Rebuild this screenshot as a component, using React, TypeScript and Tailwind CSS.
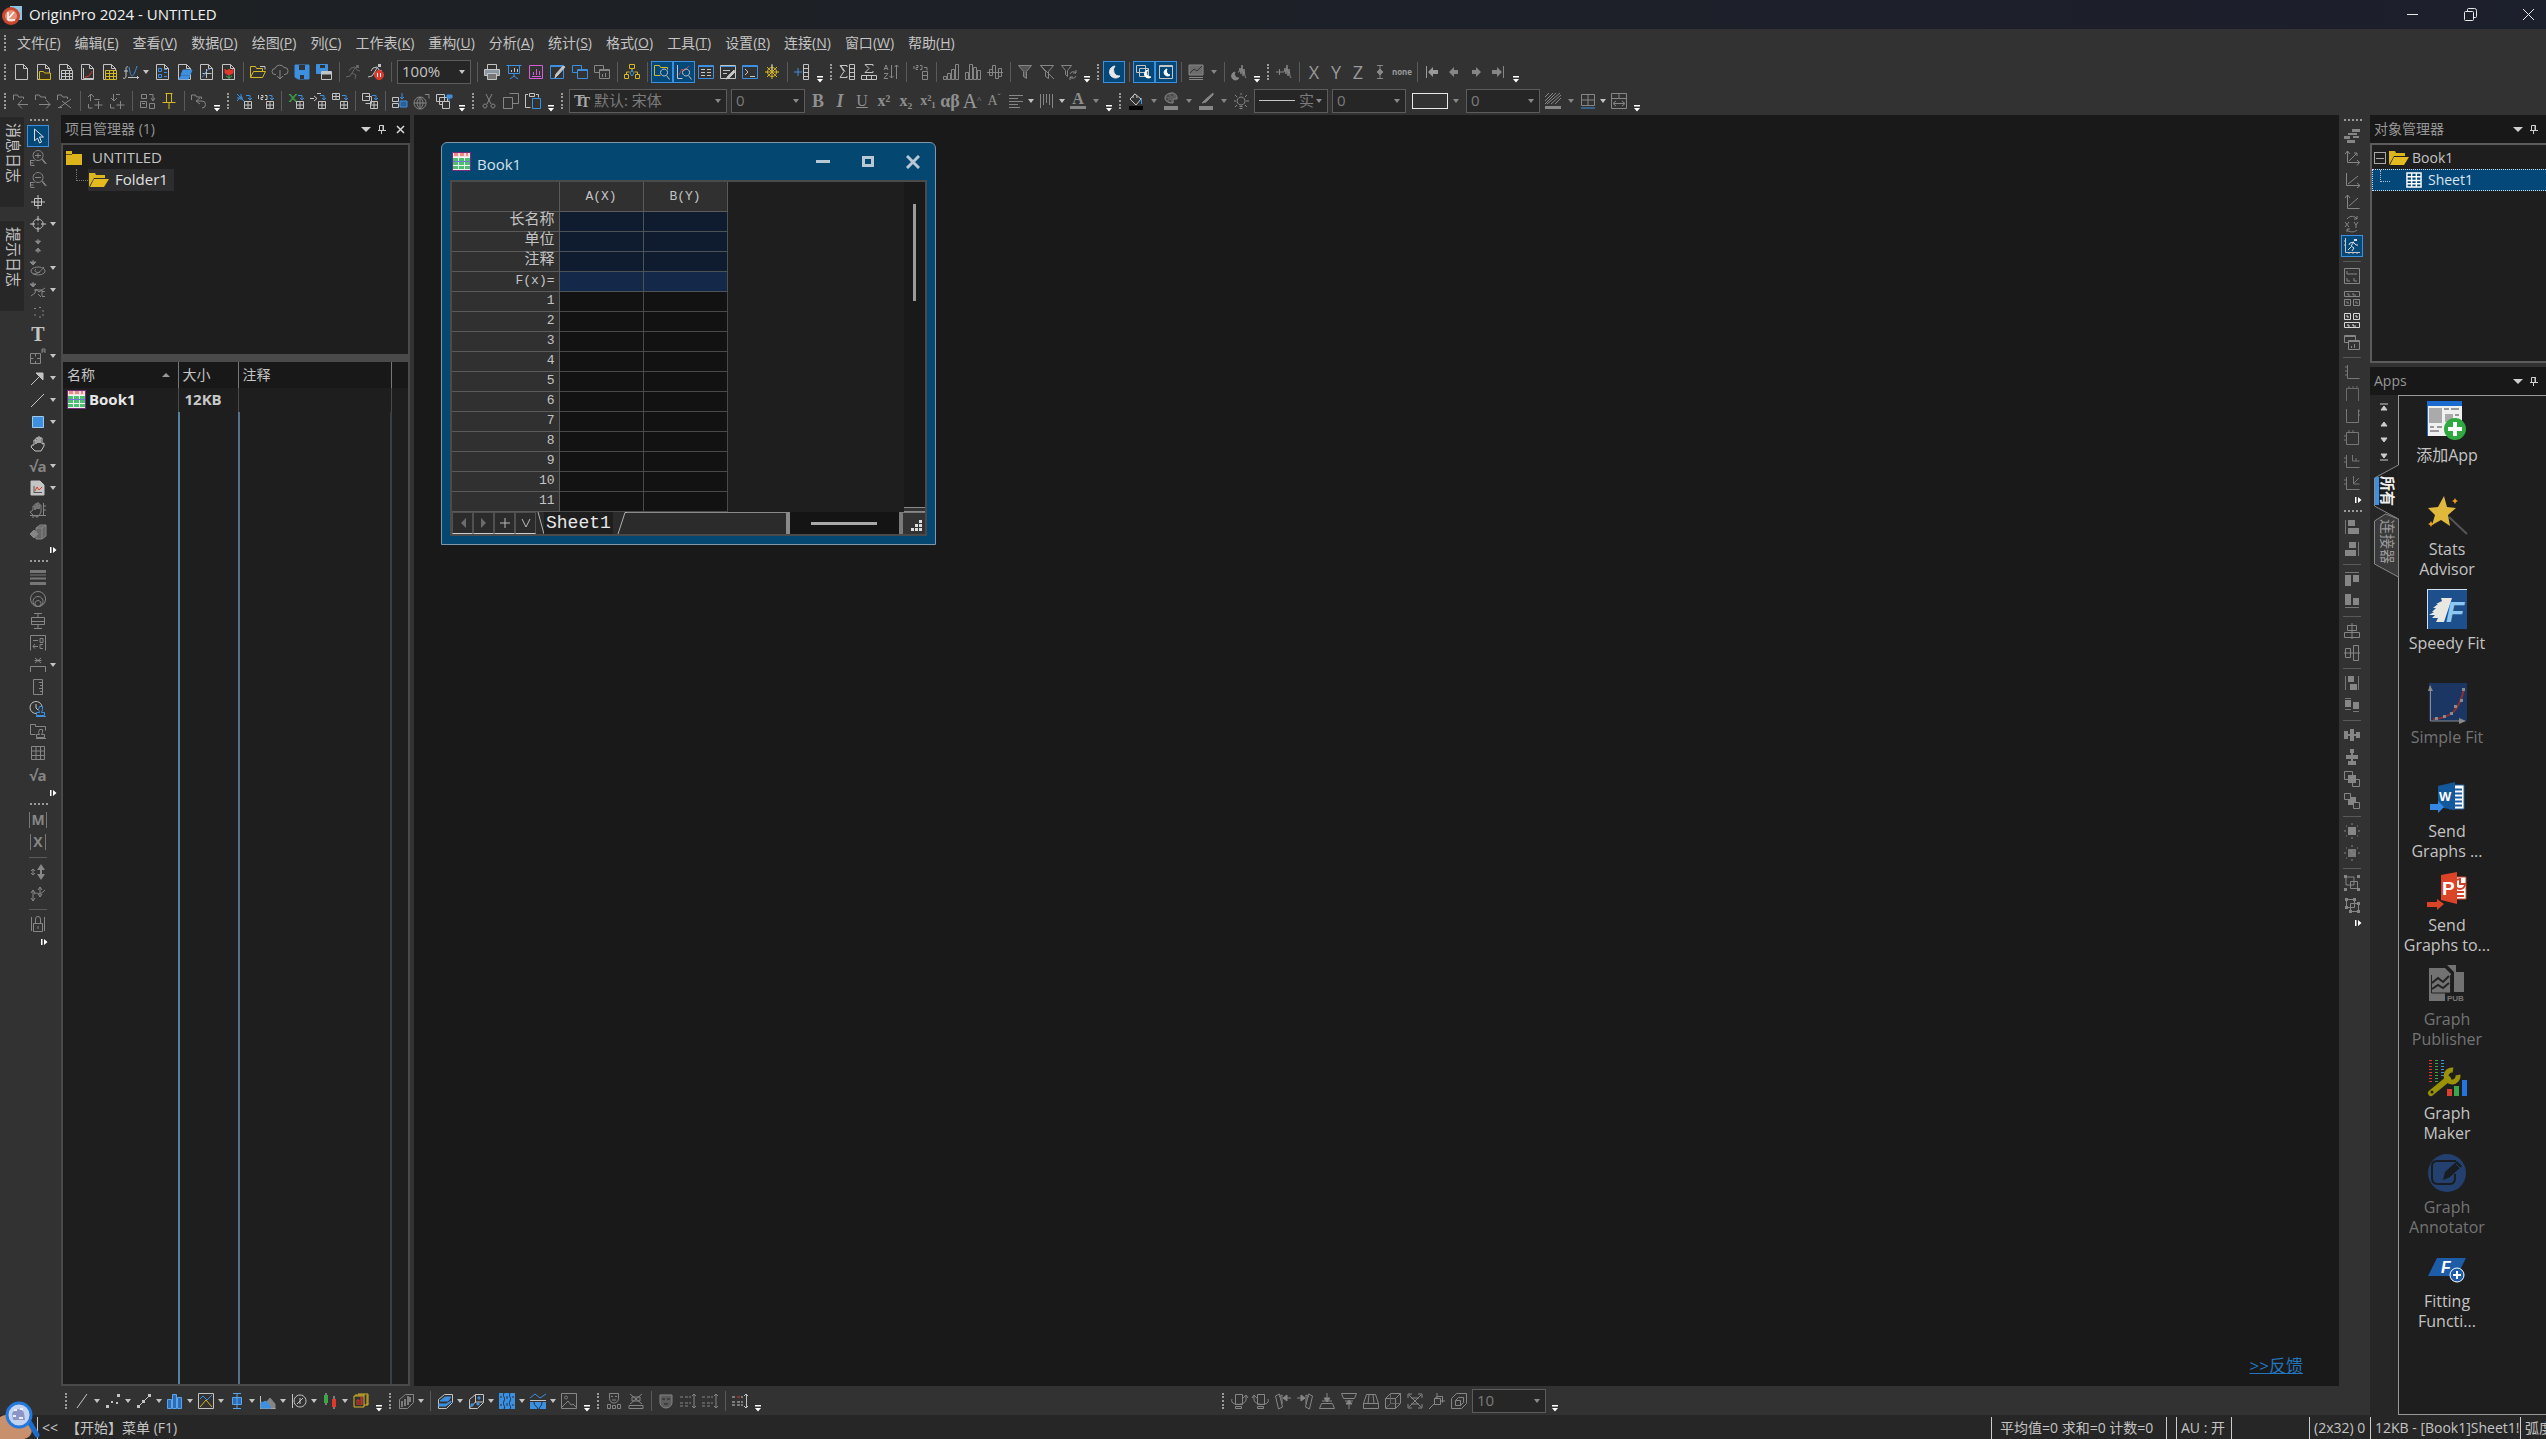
import type { ReactNode } from "react";
import clsx from "clsx";

const W = "#c4c4c4";
const G = "#868686";
const B = "#3d8fe0";
const Y = "#d6b824";
const R = "#e0392b";
const M = "#d45cd4";
const N = "#3aa648";

const DOC = "M2.5 .5h8l4 4v11h-12zM10.5 .5v4h4";
const GRID = "M4.5 6.5h11v9h-11zM8.5 6.5v9M12.5 6.5v9M4.5 9.5h11M4.5 12.5h11";
const RUN = "M9 3l-4 1-2 3M9 3l2 3 3 1M9 4l-3 5 4 2-1 4M6 9l-2 3-4 1";
const BLOCK = "M8.5 8.5h7v7h-7zM12 8.5v7M8.5 12h7";
const TURN = "M10 2.5h4v4M12 5l2 2 2-2";
const FUNNEL = "M1.5 1.5h13l-5 6v7l-3-2v-5z";
const MOON = "M9 2a6 6 0 1 0 5 10a6 6 0 0 1-5-10z";
const WAVE = "M7 8h1l1-4 1 6 1-9 1 11 1-7 1 7 1 2";
const TAB = "M.5 7v-5h4l1 2h5v2";
const HEX = "M1.5 6.5l6-5h8v8l-6 6h-8z";
const DROP = "M3 0v4M0 2l3 3 3-3z";

// each shape: path, stroke, fill
type Shape = [string, string?, string?];

const icons: Record<string, Shape[]> = {
  "New Project": [[DOC, W]],
  "New Folder": [[DOC, W], ["M4.5 7.5h4l1 1.5h6v6.5h-11z", Y, "#3a3520"]],
  "New Workbook": [[DOC, W], [GRID, W, "#333"]],
  "New Graph": [[DOC, W], ["M4.5 4v10.5h10", W], ["M6 13c3 0 5-1 7-6", R]],
  "New Matrix": [[DOC, W], [GRID, Y, "#333"]],
  "New Function Plot": [["M5 3c-2-1-2 1-2 3v6c0 2-1 3-3 2M1 7h4", W], ["M6 3c2 12 4 12 8-1", B], ["M5 13.5h11M14.5 12v3", W]],
  "New Layout": [[DOC, W], ["M4.5 4.5h3v3h-3zM4.5 10.5h3v3h-3zM10 5.5h3M10 8.5h3M10 12.5h3", B]],
  "New Notes": [[DOC, W], ["M7 6h9l-2 5h-9zM5 12h9l-2 3h-9z", B, B]],
  "New Plot": [[DOC, W], ["M4.5 9.5h9M8.5 5v9", W], ["M4 13c3-1 3-7 8-8", B]],
  "New Image": [[DOC, W], ["M5 5v4l4 2 4-2v-4l-2 2-2-2-2 2z", R, R], ["M9 11v4M6 12l3 2 3-2", N]],
  Open: [["M.5 13.5v-11h5l1 2h6v3M.5 13.5l3-6h12l-3 6z", Y], ["M10 2.5h5v3", W]],
  "Open Cloud": [["M4 10.5h-1a3 3 0 0 1 0-6a5 5 0 0 1 9-1a3.5 3.5 0 0 1 1 7h-1M8 6v9M5 12l3 3 3-3", G]],
  Save: [["M1 1h14v14h-11l-3-2z", B, B], ["M5 1h6v5h-6zM6 11h4v4h-4z", "none", "#333"]],
  "Save As": [["M.5 .5h11v9h-11z", B, B], ["M4 1h5v3h-5z", "none", "#333"], ["M5.5 7.5h10v8h-10z", W, "#333"], ["M6 8h9v2h-9z", W, W]],
  Recalculate: [[RUN, "#666"], ["M10 1h3v3h-3z", "none", "#666"]],
  "Stop Recalculate": [[RUN, W], ["M10 0h3v3h-3z", "none", W], ["M11 6.5a4.5 4.5 0 1 0 .1 0z", R, R], ["M9.5 9v4M12.5 9v4", "#fff"]],
  Print: [["M3.5 5.5v-5h9v5", W], ["M.5 5.5h15v6h-15z", W, "#8a98a4"], ["M3.5 9.5h9v6h-9z", W, "#777"]],
  "Slide Show": [["M.5 1.5h15M2.5 1.5v8h11v-8M8 10v3M4 15l4-3 4 3", B], ["M5.5 8v-2M8.5 8v-4M11.5 8v-3", W]],
  "Open Graph": [["M1.5 1.5h13v13h-13z", M], ["M4 12.5h9M5.5 11v-3M8.5 11v-6M11.5 11v-4", M]],
  "Edit Window": [["M.5 1.5h13v13h-13z", B], ["M.5 2.5h13", B], ["M15 3l-7 8-3 3 1-4 7-8z", W, W]],
  Duplicate: [["M.5 1.5h9v7h-9z", B, "#333"], ["M5.5 5.5h10v9h-10zM5.5 6.5h10", B, "#333"]],
  "Duplicate Graph": [["M.5 1.5h9v7h-9z", G, "#333"], ["M5.5 5.5h10v9h-10zM5.5 6.5h10M8.5 13v-3M11.5 13v-4", G, "#333"]],
  "Code Builder": [["M5.5 .5h5v4h-5zM.5 10.5h4v4h-4zM11.5 10.5h4v4h-4z", Y], ["M8 5v3M2.5 10v-2h3M13.5 10v-2h-3", Y], ["M8 6l2 3-2 3-2-3z", B]],
  "Project Explorer": [["M.5 1.5h5l1 2h7v2M.5 1.5v10h6", Y], ["M10 5a3.5 3.5 0 1 0 .1 0zM12.5 11.5l3 4", W]],
  "Object Manager": [["M1.5 1v13.5h5", W], ["M3 11l3-6 2 2 5-5", R], ["M10 5a3.5 3.5 0 1 0 .1 0zM12.5 11.5l3 4", W]],
  "Result Window": [["M.5 1.5h15v13h-15z", B], ["M.5 2.5h15", B], ["M3 5.5h4M3 8.5h4M3 11.5h4M9 5.5h4M9 8.5h4M9 11.5h4", W]],
  "Notes Window": [["M.5 1.5h15v13h-15z", W], ["M.5 2.5h15", B], ["M3 6.5h7M3 9.5h4", W], ["M14 6l-6 6-2 3 3-1 6-6z", W, W]],
  "Command Window": [["M.5 1.5h15v13h-15z", B], ["M.5 2.5h15", B], ["M3 5l3 3-3 3M8 12.5h5", W]],
  Settings: [["M8 1v14M1 8h14M3 3l10 10M13 3l-10 10", Y], ["M8 3.5a4.5 4.5 0 1 0 .1 0z", Y], ["M8 0v7", W]],
  "Add Column": [["M0 8h8M4 4v8", B], ["M9.5 .5h5v15h-5zM9.5 4.5h5M9.5 8.5h5M9.5 12.5h5", W]],
  "Column Statistics": [["M8 3v-1.5h-7l4 6-4 6h7v-1.5M2 2l4 5.5", W], ["M10.5 .5h5v15h-5zM10.5 4.5h5M10.5 8.5h5M10.5 12.5h5", W]],
  "Row Statistics": [["M12 2v-1.5h-8l4 4-4 4h8v-1.5", W], ["M.5 11.5h15v4h-15zM5.5 11.5v4M10.5 11.5v4", W]],
  Sort: [["M1 6l2-5 2 5M1.5 4.5h3M1 9.5h4l-4 5h4", G], ["M8.5 1v13M6.5 12l2 2 2-2M13.5 15v-14M11.5 3l2-2 2 2", G]],
  "Set Values": [["M1 2v3M3 1.5h2v2h-2v2h2M7 1.5h2v4h-2M11 3.5h3v3", G], ["M9.5 7.5h5v8h-5zM9.5 11.5h5", G]],
  "Bars Up": [["M.5 12.5h3v3h-3zM4.5 9.5h3v6h-3zM8.5 5.5h3v10h-3zM12.5 .5h3v15h-3z", G]],
  Histogram: [["M.5 8.5h3v7h-3zM4.5 .5h3v15h-3zM8.5 3.5h3v12h-3zM12.5 6.5h3v9h-3z", G]],
  "Signed Bars": [["M0 8.5h16M2.5 5.5h3v6h-3zM5.5 1.5h3v7h-3zM8.5 8.5h3v6h-3zM11.5 4.5h3v8h-3z", G]],
  Filter: [[FUNNEL, G, "#555"]],
  "Filter Off": [[FUNNEL, G], ["M1 1l14 14", G]],
  "Filter Refresh": [["M.5 1.5h10l-4 5v6l-2-2v-4z", G], ["M9 10a3.5 3.5 0 0 1 6-1M15 6v3h-3M15 12a3.5 3.5 0 0 1-6 1M9 16v-3h3", G]],
  "Dark Mode": [[MOON, "#e8e8e8", "#e8e8e8"]],
  "Dark Graphs": [["M.5 1.5h9v7h-9zM3.5 4.5h9v8h-9z", W], ["M12 6a4 4 0 1 0 3 7a4 4 0 0 1-3-7z", "#fff", "#fff"]],
  "Dark Window": [["M1.5 1.5h13v13h-13zM1.5 2.5h13", W], ["M9 5a3.5 3.5 0 1 0 3 6a4 4 0 0 1-3-6z", "#fff", "#fff"]],
  "Theme Graph": [["M1 1h14v10h-14z", G, "#6c6c6c"], ["M2 9l4-4 3 2 5-5", "#333"], ["M1 13.5h14M1 15.5h14", G]],
  "Dark Wave": [["M4 8a4 4 0 1 0 4 6a4 4 0 0 1-4-6z", G, G], [WAVE, G]],
  "Add Wave": [["M0 8h7M3.5 5v6", G], [WAVE, G]],
  "Y Error": [["M5 1.5h6M5 14.5h6M8 2v12", G], ["M8 5l3 3-3 3-3-3z", G, G]],
  First: [["M2.5 2v12", "#999"], ["M4 8l5-5v3h5v4h-5v3z", "none", "#999"]],
  Previous: [["M3 8l5-5v3h4v4h-4v3z", "none", G]],
  Next: [["M13 8l-5-5v3h-4v4h4v3z", "none", G]],
  Last: [["M13.5 2v12", G], ["M12 8l-5-5v3h-5v4h5v3z", "none", G]],

  "Move Back": [[TAB, G], ["M15 11.5h-10M9 7l-4 4.5 4 4", G]],
  "Move Forward": [[TAB, G], ["M4 11.5h11M11 7l4 4.5-4 4", G]],
  "Move Off": [[TAB, G], ["M3 14l11-8M5 8l9 7M1 14.5h4", G]],
  "Upload Add": [["M1.5 11v4h4M3.5 8v-7M1 4l3-3 3 3", G], ["M7.5 6.5h5M11.5 8v8M7.5 12h8", G]],
  "Download Add": [["M1.5 11v4h4M4.5 1v6M2 5l3 3 3-3M7 1.5h4", G], ["M11.5 8v8M7.5 12h8", G]],
  "Sync Tree": [["M2.5 1.5h5v4h-5zM1.5 8.5h6v6h-6zM10.5 10.5h5v5h-5zM10 1.5h4v6M12 5l2 3 2-3M3 10.5h3", G]],
  Pin: [["M4.5 .5h7M5.5 1v8M10.5 1v8M1.5 9.5h13M8 10v6", Y, "#6b5e18"]],
  Undo: [[TAB, G], ["M9 5l-4 3 4 3M5 8h6a3 3 0 0 1 0 7", G]],
  "Import Wizard": [["M1 1l8 8M1 5h6M5 1v6M1 8l5-5", B], [TURN, B], [BLOCK, W]],
  "Import ASCII": [["M.5 2v4M3 2.5h2v2h-2v2h2M7 2.5h2v4h-2", W], ["M11 2.5h3v4M12 5l2 2 2-2", B], [BLOCK, W]],
  "Import Excel": [["M1 1l7 8M8 1l-7 8", N], ["M2 1l7 8M9 1l-7 8", N], [TURN, B], [BLOCK, W]],
  "Import Multiple": [["M0 5.5h4M4 3l3 2.5-3 2.5M7 .5h4", W], [TURN, B], [BLOCK, W]],
  "Import Table": [["M.5 .5h7v6h-7zM4 .5v6M.5 3.5h7", W], [TURN, B], [BLOCK, W]],
  "Import Copy": [["M.5 .5h7v7h-7zM3.5 3.5h6v7h-6", W], [TURN, B], [BLOCK, W]],
  "Data Connector": [["M.5 4.5h6v4h-6zM.5 10.5h6v4h-6z", W], ["M10 0v6M8 4l2 2 2-2", B], ["M8 8h7v6h-7z", B, "#2a5f98"]],
  "Web Data": [["M6 4a6 6 0 1 0 .1 0zM0 10h12M6 4v12M6 4c-4 4-4 8 0 12M6 4c4 4 4 8 0 12M11 1.5h4v4", G]],
  "Clone Data": [["M.5 1.5h8v7h-8zM3.5 4.5h8v7h-8z", W], ["M6.5 8.5h7v7h-7z", W, "#333"], ["M11 2h5v3h-5zM13 5v3", B, B]],
  Cut: [["M5 1l5 10M11 1l-5 10", G], ["M4 11a2 2 0 1 0 .1 0zM12 11a2 2 0 1 0 .1 0z", G]],
  Copy: [["M.5 4.5h9v11h-9z", G], ["M6.5 .5h9v10h-6", G]],
  Paste: [["M3 1.5h-2.5v13h5M11 1.5h2.5v3", W], ["M4.5 .5h5v3h-5z", W], ["M7.5 5.5h8v10h-8z", B]],
  Align: [["M1 2.5h14M1 5.5h9M1 8.5h14M1 11.5h9M1 14.5h11", G]],
  Merge: [["M1.5 1v14M4.5 1v11M7.5 1v9M10.5 1v11M13.5 1v14", G]],
  "Fill Color": [["M2 6l5-5 6 5-5 6z", W], ["M5 5c0-6 4-4 4 0", W], ["M13.5 5v6", B], ["M1 13h14v4h-14z", "none", "#050505"]],
  Palette: [["M8 0a7 5 0 1 0 2 10c1-2-1-3 1-4h3a5 5 0 0 0-6-6z", G, "#5c5c5c"], ["M4 3h2M8 2h2M3 6h2M6 8h2", "#333"], ["M1 13h14v4h-14z", "none", G]],
  "Line Color": [["M15 0l-7 6-4 4 4-1 7-7z", G, G], ["M1 13h14v4h-14z", "none", G]],
  Light: [["M8 4a4 4 0 1 0 .1 0zM6.5 13.5h3M6.5 15.5h3M8 0v2M1 8h2M13 8h3M2 2l2 2M14 2l-2 2M2 14l2-2M14 14l-2-2", G]],
  Pattern: [["M0 4l4-4M0 8l8-8M0 11l11-11M2 11l13-11M6 11l10-9M10 11l6-6", G], ["M0 13h16v3h-16z", "none", G]],
  Borders: [["M1.5 1.5h13v11h-13zM8 1.5v11M1.5 7h13", G], ["M1 15h14", B]],
  "Merge Cells": [["M.5 .5h15v15h-15zM.5 5.5h15M8 .5v5M3 10.5h10M5 8l-3 2.5 3 2.5M11 8l3 2.5-3 2.5", G]],

  Pointer: [["M4.5 1v12l3-3 2 5 2-1-2-5h4z", "#e0e0e0"]],
  "Zoom In": [["M8 .5a5 5 0 1 0 .1 0zM5 5.5h6M8 3v5M.5 10.5h4M.5 10v5M.5 13h3M.5 15.5h4", G], ["M11.5 9l4 5M12.5 9l4 5", G]],
  "Zoom Out": [["M8 .5a5 5 0 1 0 .1 0zM5 5.5h6M.5 10.5h4M.5 10v5M.5 13h3M.5 15.5h4", G], ["M11.5 9l4 5M12.5 9l4 5", G]],
  "Screen Reader": [["M8 1v14M1 8h14", W], ["M4.5 4.5h7v7h-7z", W]],
  "Data Reader": [["M8 3a5 5 0 1 0 .1 0zM8 0v5M8 11v5M0 8h5M11 8h5", W], ["M7.5 8h1", W]],
  "Data Selector": [["M8 1v4M5.5 3l2.5 3 2.5-3zM8 15v-4M5.5 13l2.5-3 2.5 3z", G, G]],
  "Region Select": [[DROP, G, G], ["M8 7a7 4 0 1 0 .1 0zM3 14c5 0 8-3 11-7M6 9a3 2 0 1 0 4 3", G]],
  "Mask Points": [[DROP, G, G], ["M1 14l4-3 1-4 3 3 6-4M4 8h8v6M12 9.5h3M12 14.5h3M8 12l3 3", G]],
  "Draw Data": [["M4 4.5h2M9 3.5h2M12 7h2M4 11h2M9 13h2M12 11h2", G]],
  "Insert Graph": [["M.5 5.5h10v10h-10zM.5 10.5h3M7 10.5h3.5M5.5 5.5v3M5.5 13v3M12 5v-4h3v4M12 3h3", G]],
  Arrow: [["M1 15l10-10", W], ["M6 3h7v7z", W, W]],
  Line: [["M1 15l13-13", W]],
  Rectangle: [["M2.5 2.5h11v11h-11z", "#9cc8f0", B]],
  Hand: [["M4 9v-5h2v4v-6h2v5v-6h2v6v-5h2v6l2-1v3l-3 5h-6l-4-4 1-2z", W]],
  "Pdf Graph": [["M1 1h9l4 4v10h-13z", W, W], ["M4 6v7M4 12.5h8", "#555"], ["M5 11l2-4 2 3 3-3", R]],
  "Hand Graph": [["M3 8v-4h2v4v-6h2v5v-6h2v6v-4h2v7l-2 4h-5l-4-4zM13.5 1v13M0 13.5h16M3 13v3M7 13v3M14 4h2M14 8h2", G]],
  Cube: [["M6 4l4-3h6v11l-4 3h-6zM12 4v11M12 4l4-3M6 4h6", G, "#666"], ["M4 6l4 4-4 4-4-4z", G, G]],
  Lines: [["M0 1h16v3h-16zM0 8.5h16v2h-16zM0 5.5h16v1h-16zM0 13h16v3h-16z", "none", "#777"]],
  Target: [["M8 .5a7.5 7.5 0 1 0 .1 0zM8 5.5a5 5 0 1 0 .1 0zM8 9.5a3 3 0 1 0 .1 0z", G]],
  "Box Scale": [["M4 .5h8M4 15.5h8M8 0v4M8 12v4M1.5 4.5h13v7h-13zM1.5 8.5h13", G]],
  Legend: [["M.5 15.5v-15h15v15M3 5.5h5M3 11.5h5M5 9l-2 2.5 2 2M10 3.5h3v4h-3zM13 9.5h-3v4h3", G]],
  Asterisk: [["M5 1l6 5M11 1l-6 5M4.5 3.5h7", G], ["M.5 15v-5.5h15v5.5", G]],
  Ruler: [["M3.5 .5h9v15h-9zM9 3.5h3M10 6.5h2M9 9.5h3M10 12.5h2", G]],
  "Time Stamp": [["M6 .5a6 6 0 1 0 .1 0zM6 3v4l2 2", W], ["M9.5 5.5h3v3l-1 3h3v3h-8v-3h3l-1-3zM6 15.5h10", B, "#323232"]],
  "Project Stamp": [["M.5 1.5h5v2h10v4M.5 1.5v10h5", G], ["M9.5 6.5h3v3l-1 2h3v3h-8v-3h3l-1-2zM6 15.5h10", G]],
  "Grid Lines": [["M1.5 1.5h13v13h-13zM6 1.5v13M10.5 1.5v13M1.5 6h13M1.5 10.5h13", G]],
  Shift: [["M3 5v6M1 7l2-2 2 2M1 9l2 2 2-2", G], ["M11 0l-4 6h3v4h-3l4 6 4-6h-3v-4h3z", "none", G]],
  Shifts: [["M3 4v11M1 7l2-3 2 3M1 12l2 3 2-3M10 1v10M8 4l2-3 2 3M8 8l2 3 2-3M4 8c3-3 5 3 11-4", G]],
  Lock: [["M1.5 1v14M14.5 1v14M3.5 7.5h9v8h-9zM5.5 7v-4a2.5 2.5 0 0 1 5 0v4M8 10v3", G]],

  "Line Plot": [["M3 15l10-14", W]],
  "Scatter Plot": [["M1 12h3v3h-3zM6 8h2v2h-2zM12 1h3v3h-3zM11 9h2v2h-2z", "none", W]],
  "Line Symbol": [["M2 14l11-11", W], ["M1 12h3v3h-3zM6 7h3v3h-3zM12 1h3v3h-3z", "none", W]],
  "Column Plot": [["M.5 6.5h4v9h-4zM5.5 1.5h4v14h-4zM10.5 4.5h4v11h-4z", "#5aa4ec", "#2c6cb4"]],
  "Multi Panel": [["M.5 .5h15v15h-15z", W], ["M2 6l3-3 4 4 5-5", B], ["M2 14l6-7 6 7", Y]],
  "Box Plot": [["M4 .5h8M4 15.5h8M8 0v16M3.5 4.5h9v7h-9z", "#5aa4ec", "#2c6cb4"]],
  "Area Plot": [["M.5 3v12.5h15", W], ["M1 9l4 2 5-6 5 6v4h-14z", G, G], ["M1 10l5-2 5 7h-10z", B, B]],
  "Polar Plot": [["M1.5 1v14M9 2a6 6 0 1 0 .1 0zM9 5v6M6 11l3-3 3-3", W]],
  Candlestick: [["M4 0v12M12 3v13", W], ["M2 2h4v8h-4z", "none", N], ["M10 6h4v8h-4z", "none", R]],
  Template: [["M1 3h10v11h-10z", Y], ["M5 1h10v11h-4", Y], ["M2 2h10M14 2v10", Y], ["M4 12v-5h2v5M8 12v-8h1v8", R]],
  "3D Bars": [[HEX, G], ["M4 14v-6M7 13v-7M10 12v-9M12 9v-5", W]],
  "3D Surface": [[HEX, W], ["M3 8l5-4h6l-3 4zM2 13h7l5-4v-1l-5 3h-7z", B, B]],
  "3D Scatter": [[HEX, W], ["M7.5 1.5v8M1.5 15l6-6h8", W], ["M3 11h2v2h-2zM10 4h2v2h-2zM9 10h2v2h-2z", B, B]],
  Contour: [["M0 0h16v16h-16z", "none", B], ["M5 0c-2 4 2 4 0 8s2 5 0 8M11 0c-2 4 2 4 0 8s2 5 0 8M1 4h2M13 4h2M1 12h2M13 12h2M8 3v3M8 10v3", "#15304e"]],
  "Contour Profile": [["M0 5l5-4 5 4 6-4", B], ["M0 7.5h16", W], ["M0 9h16v7h-16z", "none", B], ["M4 9c0 4 3 4 4 7M12 9c0 4-2 4-3 7", "#15304e"]],
  "Image Plot": [["M.5 .5h15v15h-15zM1 14l6-6 3 4 2-1 3 3M5 3a1.5 1.5 0 1 0 .1 0z", G]],
  "Mask A": [["M3.5 .5h9v5a4.5 4.5 0 0 1-9 0zM5 3.5h2M9 3.5h2M6 7h4M1.5 11.5h3v4h-3zM6.5 12.5h3v3h-3zM11.5 11.5h3v4h-3z", G]],
  "Mask B": [["M2 1l12 10M14 1l-12 10M4 4h8v4h-8zM1 12.5h14v3h-14z", G]],
  "Mask C": [["M2 2h12v6a6 6 0 0 1-6 7a6 6 0 0 1-6-7z", G, "#5c5c5c"], ["M4 6h3M9 6h3M6 11h4", "#222"]],
  "Mask D": [["M0 4h3M5 4h3M9 4h2M0 10h3M5 10h3M9 10h2M0 13h3M5 13h3M14 1v14M12 3l2-2 2 2M12 13l2 2 2-2", G]],
  Unmask: [["M0 4h3M9 4h2M0 9h3M5 9h3M9 9h2M0 12h3M5 12h3M9 12h2M14.5 1v14M12 3l2-2 2 2M12 13l2 2 2-2", W], ["M5 4h3", R]],

  "Rotate CCW": [["M4.5 1.5h7v10h-7z", G], ["M1 6c-3 7 13 7 14 1v-4M12 5l3-3 2 3", G], ["M4.5 13.5h6v2h-6z", G]],
  "Rotate CW": [["M4.5 1.5h7v10h-7z", G], ["M15 6c3 7-13 7-14 1v-4M4 5l-3-3-2 3", G], ["M4.5 13.5h6v2h-6z", G]],
  "Tilt Left": [["M.5 3l4-2 3 13-4 2zM4 4l3-2v9", G], ["M16 5h-6M12 2l-4 3 4 3z", G, G]],
  "Tilt Right": [["M15.5 3l-4-2-3 13 4 2zM12 4l-3-2v9", G], ["M0 5h6M4 2l4 3-4 3z", G, G]],
  "Tilt Down": [["M.5 15.5h15l-2-5h-11zM3 8h10", G], ["M8 0v6M5 5h6l-3 4z", G, G]],
  "Tilt Up": [["M.5 .5h15l-2 5h-11zM4 8h8", G], ["M8 16v-6M5 11h6l-3-4z", G, G]],
  Perspective: [["M.5 15.5v-5h15v5zM.5 10.5l3-9h9l3 9M6 2l-1 8M10 2l1 8", G]],
  "Cube View": [["M.5 5.5h10v10h-10zM.5 5.5l5-5h10v10l-5 5M10.5 5.5l5-5", G], ["M5.5 .5v10M.5 15.5l5-5h10", "#666"]],
  "Fit View": [["M1 5v-4h4M11 1h4v4M15 11v4h-4M5 15h-4v-4M2 2l12 12M14 2l-12 12M4 5h8M4 11h8", G]],
  "Frame View": [["M5.5 5.5h6v6h-6zM8 0v5M11 8h5M5 11l-5 5M5.5 5.5l3-2h5v6", G]],
  "Reset View": [["M.5 5.5l5-5h10v10l-5 5h-10zM4.5 7.5l3-3h5v5l-3 3h-5zM4.5 7.5h5v5", G]],

  Antialias: [["M8 1h8v3h-8zM4 5h9v2h-9zM0 8h6v3h-6zM9 8h6v2h-6zM3 12h8v3h-8z", "none", G]],
  "Axes XY": [["M3.5 1v11.5h12M1 4l2.5-3 2.5 3M13 10l2.5 2.5-2.5 3M5 11l8-8M10 3h3v3", G]],
  "Axes X": [["M2.5 1v12.5h13M13 11l3 2.5-3 2.5M4 12l10-8", G]],
  "Axes Y": [["M3.5 1v13.5h12M1 4l2.5-3 2.5 3M5 12l9-8", G]],
  "Exchange XY": [["M1 6l4 5M5 6l-4 5M10 6l2 3 2-3M12 9v3M3 3c3-4 8-3 10 0M10 3h3v-3M13 14c-3 3-8 2-10 0M6 13h-3v3", G]],
  "Speed Mode": [["M1.5 0v14.5h14.5M0 3h1M0 7h1M5 15v1M9 15v1M13 15v1", W], ["M10 4l-4 1-1 2M10 4l-3 4 3 2-2 3M7 9l-3 3M10 5l2 2h2", "#e0e0e0"], ["M10 1h3v2h-3z", "none", "#e0e0e0"]],
  "Layer One": [["M.5 .5h15v15h-15zM3 3v3h10M3 10v3h3M10 10v3h3", G]],
  "Layer Two": [["M.5 1.5h15v5h-15zM.5 9.5h6v6h-6zM9.5 9.5h6v6h-6zM4 3v2h2M9 3v2h3M3 11v2h2M12 11v2h2", G]],
  "Layer Three": [["M.5 1.5h6v6h-6zM9.5 1.5h6v6h-6zM.5 10.5h15v5h-15zM3 3v2h2M12 3v2h2M4 12v2h2M9 12v2h3", "#d8d8d8"]],
  "Layer Four": [["M.5 1.5h11v7h-11zM.5 2.5h11", G], ["M4.5 6.5h11v9h-11zM4.5 7.5h11M7.5 14v-2M10.5 14v-4", G, "#333"]],
  "Axis L": [["M3.5 1v13.5h12M1 3h2M1 7h2M1 11h2", "#777"]],
  "Axis U": [["M2.5 15v-12.5h12v12.5M5 0v2M9 0v2M13 0v2", "#6a6a6a"]],
  "Axis R": [["M2.5 1v13.5h12v-13M15 3h1M15 7h1", "#777"]],
  "Axis Box": [["M2.5 2.5h12v12h-12zM5 0v2M9 0v2M0 6h2M0 10h2", "#777"]],
  "Axis Inset": [["M2.5 3v12.5h13M8.5 3v6h7M0 6h2M0 10h2M12 6v3", "#777"]],
  "Axis Inset Two": [["M2.5 3v12.5h13M9.5 2v8h6M10 9l5-5M0 6h2M0 10h2", "#777"]],
  "Align Left": [["M1.5 1v14", "#777"], ["M4 1h7v6h-7zM4 9h11v6h-11z", "none", G]],
  "Align Right": [["M14.5 1v14", "#777"], ["M5 1h7v6h-7zM1 9h11v6h-11z", "none", G]],
  "Align Top": [["M1 1.5h14", "#777"], ["M1 4h6v11h-6zM9 4h6v7h-6z", "none", G]],
  "Align Bottom": [["M1 14.5h14", "#777"], ["M1 1h6v11h-6zM9 5h6v7h-6z", "none", G]],
  "Center V": [["M3.5 2.5h9v5h-9zM.5 9.5h15v5h-15zM8 0v16", G]],
  "Center H": [["M1.5 3.5h5v9h-5zM9.5 .5h5v15h-5zM0 8h16", G]],
  "Same Width": [["M1.5 1v14M14.5 1v14", "#777"], ["M4 1h6v6h-6zM6 9h7v6h-7z", "none", G]],
  "Same Height": [["M1 1.5h6M9 14.5h6M1 12.5h6", "#777"], ["M1 3h6v7h-6zM9 5h6v7h-6z", "none", G]],
  "Spread H": [["M0 4h4v8h-4zM6 2h4v12h-4zM12 5h4v6h-4zM0 7h16v2h-16z", "none", G]],
  "Spread V": [["M6 0h4v4h-4zM2 6h12v4h-12zM4 12h8v4h-8zM7 0h2v16h-2z", "none", G]],
  Front: [["M.5 .5h8v8h-8zM8.5 8.5h7v7h-7z", G], ["M4 4h8v8h-8z", "none", G]],
  Back: [["M4 4h8v8h-8z", "none", G], ["M.5 .5h6v6h-6zM9.5 9.5h6v6h-6z", G, "#333"]],
  "Group Shade": [["M4 4h8v8h-8z", "none", G], ["M8 0v2M8 14v2M0 8h2M14 8h2M2 3h1M13 3h1M2 13h1M13 13h1", G]],
  "Ungroup Shade": [["M4 4h8v8h-8z", "none", "#777"], ["M8 0v2M8 14v2M0 8h2M14 8h2M2 3h1M13 3h1M2 13h1M6 6h2M9 9h2", G]],
  Group: [["M2 2h8v8h-8zM6.5 6.5h7v7h-7z", G], ["M0 0h3v3h-3zM13 0h3v3h-3zM0 13h3v3h-3zM13 13h3v3h-3z", "none", G]],
  Ungroup: [["M2.5 2.5h8v8h-8zM6.5 6.5h8v8h-8z", G], ["M1 1h3v3h-3zM9 1h3v3h-3zM1 9h3v3h-3zM13 5h3v3h-3zM5 13h3v3h-3zM13 13h3v3h-3z", "none", G]],
};

// buttons that are plain letters
const letters: Record<string, ReactNode> = {
  X: <span className="text-lg text-[#999]">X</span>,
  Y: <span className="text-lg text-[#999]">Y</span>,
  Z: <span className="text-lg text-[#999]">Z</span>,
  none: <span className="text-[8px] font-bold text-[#999]">none</span>,
  Bold: <span className="font-['Liberation_Serif'] text-lg font-bold text-[#8f8f8f]">B</span>,
  Italic: <span className="font-['Liberation_Serif'] text-lg font-bold text-[#8f8f8f] italic">I</span>,
  Underline: <span className="font-['Liberation_Serif'] text-base text-[#8f8f8f] underline">U</span>,
  Superscript: <span className="font-['Liberation_Serif'] text-base font-bold text-[#8f8f8f]">x²</span>,
  Subscript: <span className="font-['Liberation_Serif'] text-base font-bold text-[#8f8f8f]">x₂</span>,
  "Super Subscript": <span className="font-['Liberation_Serif'] text-sm font-bold text-[#8f8f8f]">x²₁</span>,
  Greek: <span className="font-['Liberation_Serif'] text-lg font-bold text-[#8f8f8f]">αβ</span>,
  "Larger Font": <span className="font-['Liberation_Serif'] text-xl text-[#9a9a9a]">A<sup className="text-[9px]">^</sup></span>,
  "Smaller Font": <span className="font-['Liberation_Serif'] text-sm text-[#8f8f8f]">A<sup className="text-[9px]">ˇ</sup></span>,
  "Font Color": <span className="border-b-3 border-[#868686] px-0.5 font-['Liberation_Serif'] text-base leading-[14px] font-bold text-[#8f8f8f]">A</span>,
  Text: <span className="font-['Liberation_Serif'] text-xl font-bold text-[#c4c4c4]">T</span>,
  Equation: <span className="text-[15px] font-bold text-[#868686]">√a</span>,
  "Equation Object": <span className="text-[15px] font-bold text-[#868686]">√a</span>,
  "Mask Range": <span className="border-x border-[#777] px-px text-sm leading-4 font-bold text-[#868686]">M</span>,
  "Clear Mask": <span className="border-x border-[#777] px-0.5 text-sm leading-4 font-bold text-[#868686]">X</span>,
};

function Icon({ name }: { name: string }) {
  if (letters[name]) return <>{letters[name]}</>;
  return (
    <svg viewBox="0 0 16 16" className="size-4 overflow-visible" fill="none">
      {(icons[name] ?? []).map(([d, stroke, fill], i) => (
        <path key={i} d={d} stroke={stroke ?? W} fill={fill ?? "none"} />
      ))}
    </svg>
  );
}

function Caret({ color = "#c4c4c4" }: { color?: string }) {
  return (
    <svg viewBox="0 0 8 4" className="h-1 w-2 shrink-0" fill={color}>
      <path d="M1 0h6l-3 4z" />
    </svg>
  );
}

function Grip({ vertical }: { vertical?: boolean }) {
  return (
    <span className={clsx("flex shrink-0 items-center", vertical ? "h-[10px] pl-[3px]" : "w-[10px] justify-center")}>
      <span className={clsx("border-dotted border-[#9a9a9a]", vertical ? "w-[18px] border-t-2" : "h-4 border-l-2")} />
    </span>
  );
}

function Overflow({ vertical, narrow }: { vertical?: boolean; narrow?: boolean }) {
  return (
    <button
      aria-label="More buttons"
      className={clsx("flex shrink-0", vertical ? "h-[13px] items-center" : "h-[22px] w-[13px] items-end justify-center", vertical && (narrow ? "pl-[13px]" : "pl-[22px]"))}
    >
      <svg viewBox="0 0 8 8" className={clsx("size-2", vertical && "-rotate-90")}>
        <path d="M1 1h6v1.5h-6zM1 4h6l-3 3.5z" fill="#fff" />
      </svg>
    </button>
  );
}

// "|" separator, ":" grip, ">" overflow (">>" on a narrow column); marks after a name: "!" pressed, "~" narrow arrow, "+" wide arrow
function Tools({ items, vertical }: { items: string[]; vertical?: boolean }) {
  return (
    <>
      {items.map((item, i) => {
        if (item === "|")
          return (
            <span key={i} className={clsx("flex shrink-0 items-center justify-center", vertical ? "h-2 w-[22px]" : "h-5 w-2")}>
              <span className={clsx("bg-[#5a5a5a]", vertical ? "h-px w-[18px]" : "h-5 w-px")} />
            </span>
          );
        if (item === ":") return <Grip key={i} vertical={vertical} />;
        if (item === ">" || item === ">>") return <Overflow key={i} vertical={vertical} narrow={item === ">>"} />;
        const name = item.replace(/[!~+]$/, "");
        const mark = item.slice(name.length);
        return (
          <button key={i} aria-label={name} className="flex h-[22px] shrink-0 items-center">
            <span className={clsx("flex h-[22px] w-[22px] items-center justify-center leading-none whitespace-nowrap", mark === "!" && "border border-[#3d8fe0] bg-[#04487a]")}>
              <Icon name={name} />
            </span>
            {mark === "~" && <span className="flex w-[9px]"><Caret /></span>}
            {mark === "+" && <span className="flex w-[13px] justify-center"><Caret color="#868686" /></span>}
          </button>
        );
      })}
    </>
  );
}

function Combo({ label, value, width, icon, dim }: { label: string; value: string; width: string; icon?: ReactNode; dim?: boolean }) {
  return (
    <span className={clsx("mx-0.5 flex h-6 shrink-0 items-center border border-[#5c5c5c] bg-[#262626] pr-1", width)}>
      {icon}
      <select aria-label={label} className={clsx("h-full min-w-0 flex-1 appearance-none bg-transparent pl-1 text-[15px] leading-none", dim ? "text-[#7c7c7c]" : "text-[#c4c4c4]")}>
        <option>{value}</option>
      </select>
      <Caret color={dim ? "#8a8a8a" : "#c4c4c4"} />
    </span>
  );
}

const menus = [
  ["文件", "F"], ["编辑", "E"], ["查看", "V"], ["数据", "D"], ["绘图", "P"], ["列", "C"], ["工作表", "K"], ["重构", "U"],
  ["分析", "A"], ["统计", "S"], ["格式", "O"], ["工具", "T"], ["设置", "R"], ["连接", "N"], ["窗口", "W"], ["帮助", "H"],
];

const leftTools = [
  ":", "Pointer!", "Zoom In", "Zoom Out", "Screen Reader", "Data Reader~", "Data Selector", "Region Select~", "Mask Points~",
  "Draw Data", "Text", "Insert Graph~", "Arrow~", "Line~", "Rectangle~", "Hand", "Equation~", "Pdf Graph~", "Hand Graph", "Cube", ">",
  ":", "Lines", "Target", "Box Scale", "Legend", "Asterisk~", "Ruler", "Time Stamp", "Project Stamp", "Grid Lines", "Equation Object", ">",
  ":", "Mask Range", "Clear Mask", "|", "Shift", "Shifts", "|", "Lock", ">>",
];

const rightTools = [
  ":", "Antialias", "Axes XY", "Axes X", "Axes Y", "Exchange XY", "Speed Mode!", "|", "Layer One", "Layer Two", "Layer Three", "Layer Four", "|",
  "Axis L", "Axis U", "Axis R", "Axis Box", "Axis Inset", "Axis Inset Two", ">>", ":", "Align Left", "Align Right", "|", "Align Top", "Align Bottom", "|",
  "Center V", "Center H", "|", "Same Width", "Same Height", "|", "Spread H", "Spread V", "Front", "Back", "|",
  "Group Shade", "Ungroup Shade", "|", "Group", "Ungroup", ">>",
];

const bottomTools = [
  ":", "Line Plot~", "Scatter Plot~", "Line Symbol~", "Column Plot~", "Multi Panel~", "Box Plot~", "Area Plot~", "Polar Plot~", "Candlestick~", "Template", ">",
  ":", "3D Bars~", "|", "3D Surface~", "3D Scatter~", "Contour~", "Contour Profile~", "Image Plot", ">",
  ":", "Mask A", "Mask B", "|", "Mask C", "Mask D", "Mask D", "|", "Unmask", ">",
];

function BookIcon() {
  return (
    <svg viewBox="0 0 19 19" className="size-[19px] shrink-0">
      <path d="M0 0h19v19h-19z" fill="#7a2a7a" />
      <path d="M1 1h17v4h-17z" fill="#f4dede" />
      <path d="M3 1v3M5 1v3M9 1v3M11 1v3M15 1v3" stroke={R} />
      <path d="M1 5h17v13h-17z" fill="#eef8f0" />
      <path d="M1 6h5v3h-5zM7 6h5v3h-5zM13 6h5v3h-5zM1 10h5v3h-5zM7 10h5v3h-5zM13 10h5v3h-5zM1 14h5v3h-5zM7 14h5v3h-5zM13 14h5v3h-5z" fill="#4cc070" />
      <path d="M1 9.5h17" stroke="#6a78d8" />
    </svg>
  );
}

function FolderIcon({ open }: { open?: boolean }) {
  return open ? (
    <svg viewBox="0 0 20 14" className="h-[14px] w-5 shrink-0">
      <path d="M0 14v-14h6l1 2h9v3h-11z" fill="#dcb41c" />
      <path d="M5 6h15l-5 8h-14z" fill="#e4bc20" />
    </svg>
  ) : (
    <svg viewBox="0 0 16 14" className="h-[14px] w-4 shrink-0">
      <path d="M0 0h6v3h10v11h-16z" fill="#dcb41c" />
      <path d="M0 3.5h6" stroke="#6b5810" />
    </svg>
  );
}

function PanelHead({ title, closable }: { title: string; closable?: boolean }) {
  return (
    <div className={clsx("flex h-7 shrink-0 items-center bg-[#181818] pl-1 text-sm text-[#969696]", closable ? "pr-0.5" : "pr-1.5")}>
      <h2 className="flex-1">{title}</h2>
      <span className="flex items-center gap-1">
        <button aria-label="Options" className="flex w-3 justify-center">
          <svg viewBox="0 0 10 5" className="h-[5px] w-[10px]" fill="#d0d0d0"><path d="M0 0h10l-5 5z" /></svg>
        </button>
        <button aria-label="Auto hide" className="flex w-3 justify-center">
          <svg viewBox="0 0 8 9" className="h-[9px] w-2" fill="none" stroke="#d0d0d0"><path d="M1.5 5v-4.5h4v4.5M5 0v5M0 5.5h8M3.5 6v3" /></svg>
        </button>
        {closable && (
          <button aria-label="Close" className="flex w-4 justify-center">
            <svg viewBox="0 0 9 9" className="size-[9px]" stroke="#d8d8d8" strokeWidth="1.5"><path d="M1 1l7 7M8 1l-7 7" /></svg>
          </button>
        )}
      </span>
    </div>
  );
}

const art: Record<string, ReactNode> = {
  add: (
    <>
      <path d="M0 0h35v35h-35z" fill="#f0f0f0" />
      <path d="M0 0h35v5h-35zM0 5h1v30h-1z" fill="#1c6cd0" />
      <path d="M2 7h13v15h-13zM18 13h8v8h-8z" fill="#aaa" />
      <path d="M17 8h5M24 8h8M3 26h4M10 26h5M3 30h9M28 14h4" stroke="#999" strokeWidth="2" />
      <circle cx="28" cy="28" r="11" fill="#30a840" />
      <path d="M28 21v14M21 28h14" stroke="#fff" strokeWidth="4" />
    </>
  ),
  stats: (
    <>
      <path d="M22 22l18 17" stroke="#555" strokeWidth="2" />
      <path d="M17 1l3 11 9 1-8 7 2 11-9-6-9 5 3-10-7-7 10-1z" fill="#e0b83c" />
      <path d="M28 3l1 2 2 1-2 1-1 2-1-2-2-1 2-1zM4 26l1 2 2 1-2 1-1 2-1-2-2-1 2-1z" fill="#f0a020" />
    </>
  ),
  speedy: (
    <>
      <path d="M0 0h40v40h-40z" fill="#1d4f8c" />
      <path d="M0 .5h40M.5 0v40" stroke="#cfe0f0" />
      <path d="M14 9h11l-8 24h-8l2-4h-6l3-3h-6l5-3h-2l4-4h-3l5-4h-2l6-3z" fill="#e8e8e0" />
      <text x="19" y="33" fontSize="30" fontStyle="italic" fontWeight="bold" fill="#8cc8f4" fontFamily="Liberation Sans Narrow, Liberation Sans">F</text>
    </>
  ),
  simple: (
    <>
      <path d="M2 0h38v38h-38z" fill="#1c3664" />
      <path d="M3.5 3v35h34" stroke="#8a8a8a" fill="none" />
      <path d="M1 8l2-6 3 6zM32 35l7 3-7 3z" fill="#8a8a8a" />
      <path d="M6 36c18-1 26-8 31-30" stroke="#8c3034" strokeWidth="2" fill="none" />
      <path d="M8 34h3v3h-3zM16 32h3v3h-3zM23 29h3v3h-3zM27 22h3v3h-3zM33 16h3v3h-3zM35 5h3v3h-3z" fill="#8a8a8a" />
    </>
  ),
  word: (
    <>
      <path d="M22 8h15v24h-15z" fill="#fff" stroke="#1c5ca0" />
      <path d="M27 12.5h8M27 16.5h8M27 20.5h8M27 24.5h8M27 28.5h8" stroke="#1c5ca0" strokeWidth="2" />
      <path d="M11 9l17-4v28l-17-3z" fill="#14589c" />
      <text x="12" y="24" fontSize="13" fontWeight="bold" fill="#fff" fontFamily="Liberation Sans">W</text>
      <path d="M3 27h8v-3l6 6-6 6v-3h-8z" fill="#3488e4" />
    </>
  ),
  ppt: (
    <>
      <path d="M25 6h14v22h-14z" fill="#fff" stroke="#d04028" />
      <path d="M33 8a5 5 0 1 0 5 5h-5zM29 21h8M29 25h8" stroke="#d04028" strokeWidth="2" fill="none" />
      <path d="M14 4l16-3v32l-16-4z" fill="#dc4428" />
      <text x="15" y="24" fontSize="19" fontWeight="bold" fill="#fff" fontFamily="Liberation Sans">P</text>
      <path d="M0 31h10v-3l7 5-7 6v-3h-10z" fill="#dc4428" />
    </>
  ),
  publisher: (
    <>
      <path d="M2 3h16l6 6v19h-6v8h-16zM20 0h9v7h8v20h-10v-20z" fill="#727272" />
      <path d="M4.5 10v18h19v-18" stroke="#222" fill="none" />
      <path d="M5 18l6-5 5 4 6-6M5 24l6-4 5 3 6-5" stroke="#222" strokeWidth="2" fill="none" />
      <text x="20" y="36" fontSize="8" fontWeight="bold" fill="#777" fontFamily="Liberation Sans">PUB</text>
    </>
  ),
  maker: (
    <>
      <path d="M3.5 1v22" stroke={R} strokeWidth="3" strokeDasharray="1 2" />
      <path d="M9.5 1v22" stroke={N} strokeWidth="3" strokeDasharray="1 2" />
      <path d="M15.5 1v17" stroke={B} strokeWidth="3" strokeDasharray="1 2" />
      <path d="M4 34l17-14" stroke="#9a9208" strokeWidth="6" strokeLinecap="round" />
      <path d="M31 16a6 6 0 1 1-5-5" stroke="#9a9208" strokeWidth="5" fill="none" />
      <circle cx="5" cy="33" r="1.5" fill="#222" />
      <path d="M20 30h5v7h-5z" fill="#d84030" />
      <path d="M27 27h5v10h-5z" fill={N} />
      <path d="M35 21h5v16h-5z" fill="#2474e0" />
    </>
  ),
  annotator: (
    <>
      <circle cx="20" cy="20" r="19" fill="#24406e" />
      <path d="M29 8h-19q-5 0-5 5v12q0 6 6 6h12q5 0 5-6v-4" stroke="#191c20" strokeWidth="2" fill="none" />
      <path d="M16 27l2-8 12-11 5 5-12 11z" fill="#191c20" />
      <path d="M29 11l4 4" stroke="#24406e" />
    </>
  ),
  fitting: (
    <>
      <path d="M10 11h29l-9 18h-29z" fill="#1c5ca8" />
      <text x="14" y="26" fontSize="16" fontStyle="italic" fontWeight="bold" fill="#fff" fontFamily="Liberation Sans">F</text>
      <circle cx="30" cy="28" r="7" fill="#1c5ca8" stroke="#fff" />
      <path d="M30 24v8M26 28h8" stroke="#fff" strokeWidth="2" />
    </>
  ),
};

const apps = [
  { art: "add", label: "添加App" },
  { art: "stats", label: "Stats Advisor" },
  { art: "speedy", label: "Speedy Fit" },
  { art: "simple", label: "Simple Fit", off: true },
  { art: "word", label: "Send Graphs ..." },
  { art: "ppt", label: "Send Graphs to..." },
  { art: "publisher", label: "Graph Publisher", off: true },
  { art: "maker", label: "Graph Maker" },
  { art: "annotator", label: "Graph Annotator", off: true },
  { art: "fitting", label: "Fitting Functi..." },
];

function BookWindow() {
  return (
    <section className="absolute top-[27px] left-[27px] flex h-[403px] w-[495px] flex-col rounded-t-md border border-[#7f97a8] bg-[#044872] px-2 pb-2">
      <header className="flex h-[37px] shrink-0 items-center gap-1.5 pl-0.5 text-[15px] text-[#d8e0e8]">
        <BookIcon />
        <h3 className="flex-1 pt-1.5">Book1</h3>
        <div className="-mr-2 flex items-center">
          <button aria-label="Minimize" className="flex w-[45px] justify-center">
            <span className="h-[3px] w-[14px] bg-[#b8c8d4]" />
          </button>
          <button aria-label="Maximize" className="flex w-[45px] justify-center">
            <span className="h-[11px] w-3 border-3 border-[#b8c8d4]" />
          </button>
          <button aria-label="Close" className="flex w-[45px] justify-center">
            <svg viewBox="0 0 14 14" className="size-[14px]" stroke="#b8c8d4" strokeWidth="3"><path d="M1 1l12 12M13 1L1 13" /></svg>
          </button>
        </div>
      </header>
      <div className="flex min-h-0 flex-1 flex-col border-2 border-[#4a4a4a] bg-[#1e1e1e]">
        <div className="flex min-h-0 flex-1">
          <div className="min-h-0 flex-1 overflow-hidden">
            <table className="table-fixed border-collapse font-['Liberation_Mono','Noto_Sans_CJK_SC',monospace] text-[13px] leading-none text-[#c4c4c4]">
              <thead>
                <tr className="h-[29px] bg-[#303030]">
                  <th className="w-[107px] border-r border-b border-[#5a5a5a]" />
                  <th className="w-[84px] border-r border-b border-[#5a5a5a] font-normal">A(X)</th>
                  <th className="w-[84px] border-r border-b border-[#5a5a5a] font-normal">B(Y)</th>
                </tr>
              </thead>
              <tbody>
                {["长名称", "单位", "注释", "F(x)="].map((t) => (
                  <tr key={t} className="h-5">
                    <th className="border-r border-b border-[#5a5a5a] bg-[#303030] pr-1 pb-0.5 text-right font-normal">
                      <span className={clsx("block", t !== "F(x)=" && "text-[15px] leading-none")}>{t}</span>
                    </th>
                    {[0, 1].map((c) => (
                      <td key={c} className={clsx("border-r border-b border-[#4c5358]", t === "F(x)=" ? "bg-[#14294a]" : "bg-[#0f1b2e]")} />
                    ))}
                  </tr>
                ))}
                {Array.from({ length: 11 }, (_, r) => (
                  <tr key={r} className="h-5">
                    <th className="border-r border-b border-[#5a5a5a] bg-[#303030] pr-1 pb-0.5 text-right font-normal">{r + 1}</th>
                    <td className="border-r border-b border-[#4a4a4a] bg-[#121212]" />
                    <td className="border-r border-b border-[#4a4a4a] bg-[#121212]" />
                  </tr>
                ))}
              </tbody>
            </table>
          </div>
          <div className="flex w-[21px] shrink-0 flex-col items-center justify-between bg-[#191919]">
            <span className="mt-[22px] h-[97px] w-[3px] bg-[#9a9a9a]" />
            <span className="h-[5px] w-full border-y border-[#888] bg-[#333]" />
          </div>
        </div>
        <div className="flex h-[22px] shrink-0 bg-[#2b2b2b]">
          {["M8 0v10l-5-5z", "M2 0v10l5-5z"].map((d) => (
            <button key={d} aria-label="Scroll sheets" className="flex w-[21px] shrink-0 items-center justify-center border border-[#505050] border-b-[#ccc]">
              <svg viewBox="0 0 10 10" className="size-[10px]" fill="#6c6c6c"><path d={d} /></svg>
            </button>
          ))}
          {["M5 0v10M0 5h10", "M1 1l4 8 4-8"].map((d) => (
            <button key={d} aria-label="Sheets" className="flex w-[21px] shrink-0 items-center justify-center border border-[#505050] border-b-[#ccc]">
              <svg viewBox="0 0 10 10" className="size-[10px]" fill="none" stroke="#bbb"><path d={d} /></svg>
            </button>
          ))}
          <svg viewBox="0 0 8 22" className="h-[22px] w-2 shrink-0" stroke="#b0b0b0"><path d="M2 0l6 22" /></svg>
          <button className="shrink-0 bg-[#1e1e1e] px-0.5 font-['Liberation_Mono'] text-lg leading-none text-[#e8e8e8]">Sheet1</button>
          <svg viewBox="0 0 14 22" className="h-[22px] w-[14px] shrink-0" stroke="#b0b0b0"><path d="M5 22l7-21.5h2" fill="none" /></svg>
          <span className="w-[163px] shrink-0 border-t border-r-4 border-[#8a8a8a]" />
          <span className="flex flex-1 items-center justify-center bg-[#141414]">
            <span className="h-[3px] w-[66px] bg-[#a8a8a8]" />
          </span>
          <span className="flex w-[26px] shrink-0 items-end justify-end border-t border-l-4 border-[#7a7a7a] bg-[#333] p-0.5">
            <svg viewBox="0 0 12 12" className="size-3" fill="#ddd"><path d="M8 0h3v3h-3zM4 4h3v3h-3zM8 4h3v3h-3zM0 8h3v3h-3zM4 8h3v3h-3zM8 8h3v3h-3z" /></svg>
          </span>
        </div>
      </div>
    </section>
  );
}

export default function App() {
  return (
    <div className="relative flex h-screen flex-col overflow-hidden bg-[#323232] font-['Open_Sans','Noto_Sans_CJK_SC',sans-serif] text-sm text-[#c4c4c4] select-none">
      {/* Title bar */}
      <header className="flex h-[29px] shrink-0 items-center gap-[7px] bg-linear-to-r from-[#1d2123] to-[#1c1f2c] pl-0.5">
        <svg viewBox="0 0 20 20" className="size-5">
          <path d="M8 1h12v14h-12z" fill="#8cc4e8" />
          <circle cx="9" cy="11" r="9" fill="#c84830" />
          <circle cx="9" cy="11" r="6" fill="#e89078" />
          <path d="M6 7v8M6 15h7M7 13l5-6" stroke="#fff" strokeWidth="1.5" fill="none" />
        </svg>
        <h1 className="flex-1 text-[15px] text-[#f0f0f0]">OriginPro 2024 - UNTITLED</h1>
        <div className="-mr-[11px] flex">
          {["M1 6.5h11", "M3.5 3v-1.5q0-1 1-1h6q2 0 2 2v6q0 1-1 1h-1.5M.5 4.5q0-1 1-1h7q1 0 1 1v7q0 1-1 1h-7q-1 0-1-1z", "M1 1l11 11M12 1l-11 11"].map((d) => (
            <button key={d} aria-label="Window control" className="flex w-[58px] justify-center">
              <svg viewBox="0 0 13 13" className="size-[13px]" fill="none" stroke="#e8e8e8"><path d={d} /></svg>
            </button>
          ))}
        </div>
      </header>

      {/* Menu */}
      <nav className="flex h-7 shrink-0 items-center">
        <Grip />
        {menus.map(([label, key]) => (
          <button key={key} className="px-[7px] whitespace-nowrap">
            {label}(<u>{key}</u>)
          </button>
        ))}
      </nav>

      {/* Toolbars */}
      <div className="flex h-[29px] shrink-0 items-center">
        <Tools items={[":", "New Project", "New Folder", "New Workbook", "New Graph", "New Matrix", "New Function Plot~", "New Layout", "New Notes", "New Plot", "New Image", "|", "Open", "Open Cloud", "Save", "Save As", "|", "Recalculate", "Stop Recalculate", "|"]} />
        <Combo label="Zoom" value="100%" width="w-[74px]" />
        <Tools
          items={[
            "|", "Print", "Slide Show", "Open Graph", "Edit Window", "Duplicate", "Duplicate Graph", "|", "Code Builder", "|",
            "Project Explorer!", "Object Manager!", "Result Window", "Notes Window", "Command Window", "Settings", "|", "Add Column", ">",
            ":", "Column Statistics", "Row Statistics", "Sort", "|", "Set Values", "|", "Bars Up", "Histogram", "Signed Bars", "|", "Filter", "Filter Off", "Filter Refresh", ">",
            ":", "Dark Mode!", "|", "Dark Graphs!", "Dark Window!", "|", "Theme Graph+", "|", "Dark Wave", ">",
            ":", "Add Wave", "|", "X", "Y", "Z", "Y Error", "none", "|", "First", "Previous", "Next", "Last", ">",
          ]}
        />
      </div>
      <div className="flex h-[29px] shrink-0 items-center">
        <Tools
          items={[
            ":", "Move Back", "Move Forward", "Move Off", "|", "Upload Add", "Download Add", "|", "Sync Tree", "Pin", "|", "Undo", ">",
            ":", "Import Wizard", "Import ASCII", "|", "Import Excel", "Import Multiple", "Import Table", "|", "Import Copy", "|", "Data Connector", "Web Data", "Clone Data", ">",
            ":", "Cut", "Copy", "Paste", ">", ":",
          ]}
        />
        <Combo
          label="Font"
          value="默认: 宋体"
          width="w-[158px]"
          dim
          icon={<span className="flex items-end pl-1 font-['Liberation_Serif'] text-base leading-none font-bold text-[#a8a8a8]">T<span className="-ml-1 text-sm leading-3">T</span></span>}
        />
        <Combo label="Font size" value="0" width="w-[74px]" dim />
        <Tools
          items={[
            "Bold", "Italic", "Underline", "Superscript", "Subscript", "Super Subscript", "Greek", "Larger Font", "Smaller Font", "Align~", "Merge~", "Font Color+", ">",
            ":", "Fill Color+", "Palette+", "Line Color+", "Light",
          ]}
        />
        <Combo label="Line style" value="实" width="w-[74px]" dim icon={<span className="ml-1 h-px w-9 bg-[#c4c4c4]" />} />
        <Combo label="Line width" value="0" width="w-[74px]" dim />
        <button aria-label="Pattern color" className="flex items-center gap-1 px-1">
          <span className="h-4 w-9 border border-[#e8e8e8]" />
          <Caret color="#8a8a8a" />
        </button>
        <Combo label="Pattern width" value="0" width="w-[74px]" dim />
        <Tools items={["Pattern+", "Borders~", "Merge Cells", ">"]} />
      </div>

      <div className="flex min-h-0 flex-1">
        <div className="flex min-w-0 flex-1 flex-col">
          <div className="flex min-h-0 flex-1">
            {/* Collapsed log tabs */}
            <div className="flex w-[25px] shrink-0 flex-col gap-[14px] pt-0.5">
              {["消息日志", "提示日志"].map((t) => (
                <button key={t} className="flex h-[90px] w-6 bg-[#272727] pt-1.5 text-[15px] leading-5 [text-orientation:sideways] [writing-mode:vertical-rl]">
                  {t}
                </button>
              ))}
            </div>
            <div className="flex w-9 shrink-0 flex-col items-start pl-0.5">
              <Tools items={leftTools} vertical />
            </div>

            {/* Project explorer */}
            <aside className="flex w-[349px] shrink-0 flex-col">
              <PanelHead title="项目管理器 (1)" closable />
              <div className="flex h-[213px] shrink-0 flex-col border-2 border-[#4a4a4a] bg-[#1e1e1e] pt-0.5 text-[15px]">
                <div className="flex h-[22px] items-center gap-2 pl-[3px]">
                  <FolderIcon /> <span className="pl-0.5">UNTITLED</span>
                </div>
                <div className="flex h-[22px] items-center">
                  <span className="ml-[13px] h-3 w-3 self-start border-b border-l border-dotted border-[#777]" />
                  <span className="flex h-[22px] items-center gap-1.5 bg-[#2d2d2f] pr-1.5 pl-px text-[#e0e0e0]">
                    <FolderIcon open /> Folder1
                  </span>
                </div>
              </div>
              <div className="flex min-h-0 flex-1 flex-col border-2 border-t-6 border-[#4a4a4a] bg-[#1e1e1e]">
                <table className="w-full table-fixed border-collapse text-left">
                  <thead>
                    <tr className="h-[26px] bg-[#181818]">
                      <th className="w-[115px] border-r border-[#777] pl-1 font-normal">
                        <span className="flex items-center justify-between pr-2">
                          名称
                          <svg viewBox="0 0 8 4" className="h-1 w-2" fill="#999"><path d="M0 4h8l-4-4z" /></svg>
                        </span>
                      </th>
                      <th className="w-[60px] border-r border-[#777] pl-1 font-normal">大小</th>
                      <th className="w-[153px] border-r border-[#777] pl-1 font-normal">注释</th>
                      <th />
                    </tr>
                  </thead>
                  <tbody>
                    <tr className="h-6 text-[15px] font-bold text-[#c8c8c8]">
                      <td className="border-r border-[#4a4a4a] pl-1 text-[#e8e8e8]">
                        <span className="flex items-center gap-[3px]"><BookIcon /> Book1</span>
                      </td>
                      <td className="border-r border-[#4a4a4a] pl-1.5">12KB</td>
                      <td className="border-r border-[#4a4a4a]" />
                      <td />
                    </tr>
                  </tbody>
                </table>
                <div className="flex flex-1">
                  <span className="w-[117px] border-r-2 border-[#57809c]" />
                  <span className="w-[60px] border-r-2 border-[#52708a]" />
                  <span className="w-[152px] border-r-2 border-[#3a3f44]" />
                </div>
              </div>
            </aside>

            {/* Workspace */}
            <main className="relative ml-1 flex-1 bg-[#191919]">
              <BookWindow />
              <a href="#feedback" className="absolute right-9 bottom-2 text-[17px] text-[#2474bc] underline">&gt;&gt;反馈</a>
            </main>
          </div>

          {/* Plot toolbar */}
          <div className="grid h-[29px] shrink-0 grid-cols-2 pl-[61px]">
            <div className="flex items-center">
              <Tools items={bottomTools} />
            </div>
            <div className="flex items-center pl-[18px]">
              <Tools items={[":", "Rotate CCW", "Rotate CW", "Tilt Left", "Tilt Right", "Tilt Down", "Tilt Up", "Perspective", "Cube View", "Fit View", "Frame View", "Reset View"]} />
              <Combo label="Rotation step" value="10" width="w-[74px]" dim />
              <Tools items={[">"]} />
            </div>
          </div>
        </div>

        <div className="flex w-[31px] shrink-0 flex-col items-start pl-0.5">
          <Tools items={rightTools} vertical />
        </div>

        {/* Right dock */}
        <aside className="flex w-[176px] shrink-0 flex-col bg-[#262626]">
          <PanelHead title="对象管理器" />
          <div className="flex h-[220px] shrink-0 flex-col border-2 border-r-0 border-[#5c5c5c] bg-[#1e1e1e] pt-0.5">
            <div className="flex h-[22px] items-center gap-[3px] pl-0.5">
              <button aria-label="Collapse" className="flex size-3 items-center justify-center border border-[#aaa]">
                <span className="h-px w-2 bg-[#aaa]" />
              </button>
              <FolderIcon open /> Book1
            </div>
            <div className="flex h-[22px] items-center border border-r-0 border-dotted border-[#d0d8e0] bg-[#04487a] text-[#dce4ec]">
              <span className="ml-[7px] h-3 w-[10px] self-start border-b border-l border-dotted border-[#b0c0d0]" />
              <svg viewBox="0 0 17 17" className="mr-1.5 ml-4 size-4" fill="none" stroke="#fff" strokeWidth="1.5">
                <path d="M1 1h15v15h-15zM6 1v15M11 1v15M1 5h15M1 9h15M1 12.5h15" />
              </svg>
              Sheet1
            </div>
          </div>
          <div className="h-1 shrink-0 bg-[#323232]" />
          <PanelHead title="Apps" />
          <div className="flex min-h-0 flex-1">
            <div className="flex w-[29px] shrink-0 flex-col">
              <div className="flex h-[70px] flex-col items-center justify-around border-r border-[#999] pt-1">
                {["M0 1h8M1 7l3-4 3 4z", "M1 6l3-4 3 4z", "M1 2l3 4 3-4z", "M0 7h8M1 1l3 4 3-4z"].map((d) => (
                  <button key={d} aria-label="Scroll tabs">
                    <svg viewBox="0 0 8 8" className="block size-2" fill="#ccc" stroke="#ccc"><path d={d} /></svg>
                  </button>
                ))}
              </div>
              {/* tab outlines with their labels over them */}
              <div className="relative h-[112px]">
                <svg viewBox="0 0 29 112" className="h-[112px] w-[29px]" fill="none" stroke="#888">
                  <path d="M28.5 0l-24 13v28l24 13v-54" fill="#1e1e1e" stroke="none" />
                  <path d="M28.5 0l-24 13v28l24 13" />
                  <path d="M28.5 54l-13-5-11 7v43l24 13z" fill="#3a3a3a" />
                  <path d="M5 12h4v28h-4z" fill="#3d8fe0" stroke="none" />
                </svg>
                <button className="absolute top-[11px] left-2 text-[15px] leading-5 font-bold text-[#eee] [text-orientation:sideways] [writing-mode:vertical-rl]">所有</button>
                <button className="absolute top-[54px] left-2 text-[15px] leading-5 text-[#999] [text-orientation:sideways] [writing-mode:vertical-rl]">连接器</button>
              </div>
              <div className="flex-1 border-r border-[#999]" />
            </div>
            <ul className="flex flex-1 flex-col items-start overflow-hidden border-y border-[#999] bg-[#1e1e1e] pt-[5px]">
              {apps.map((a) => (
                <li key={a.art} className="h-[94px] w-[96px] shrink-0">
                  <button className={clsx("flex w-full flex-col items-center gap-1 px-1 text-base leading-5", a.off && "text-[#747474]")}>
                    <svg viewBox="0 0 40 40" className="size-10 overflow-visible">{art[a.art]}</svg>
                    {a.label}
                  </button>
                </li>
              ))}
            </ul>
          </div>
        </aside>
      </div>

      {/* Status bar */}
      <footer className="flex h-6 shrink-0 items-end bg-[#262626] whitespace-nowrap">
        <span className="ml-[37px] flex h-[22px] flex-1 items-center gap-2 border-l border-[#ccc] pl-1">
          <span>&lt;&lt;</span>【开始】菜单 (F1)
        </span>
        <span className="flex h-[22px] w-[175px] items-center border-l border-[#ccc] pl-2">平均值=0 求和=0 计数=0</span>
        <span className="h-[22px] w-[10px] border-l border-[#ccc]" />
        <span className="flex h-[22px] w-[55px] items-center border-l border-[#ccc] pl-1">AU : 开</span>
        <span className="h-[22px] w-[78px] border-l border-[#ccc]" />
        <span className="flex h-[22px] w-[61px] items-center border-l border-[#ccc] pl-1">(2x32) 0</span>
        <span className="flex h-[22px] w-[150px] items-center border-l border-[#ccc] pl-1">12KB - [Book1]Sheet1!</span>
        <span className="flex h-[22px] w-[26px] items-center overflow-hidden border-l border-[#ccc] pl-1">弧度</span>
      </footer>

      {/* Learning center magnifier */}
      <button aria-label="Learning center" className="absolute bottom-0 left-0">
        <svg viewBox="0 0 40 38" className="block h-[38px] w-10">
          <path d="M0 16c10-6 30-2 32 12q0 8-8 10h-24z" fill="#c8906c" />
          <path d="M30 22l7 12" stroke="#1c6ccc" strokeWidth="5" strokeLinecap="round" />
          <circle cx="19" cy="14" r="12" fill="#c4d4f0" stroke="#2478dc" strokeWidth="3" />
          <path d="M12 13c2-6 10-6 12-1l1 7h-12z" fill="#8c94c8" />
          <path d="M14 9h3M20 8h3M13 15h3M19 17h4" stroke="#e8f0ff" strokeWidth="2" />
        </svg>
      </button>
    </div>
  );
}
